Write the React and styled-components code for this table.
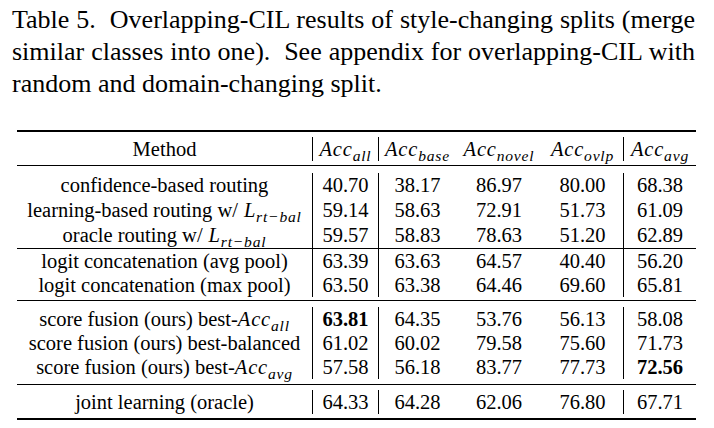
import React from "react";
import styled, { createGlobalStyle } from "styled-components";

const GlobalStyle = createGlobalStyle`
  html, body {
    margin: 0;
    padding: 0;
    background: #fff;
  }
`;

const Page = styled.div`
  width: 714px;
  height: 428px;
  overflow: hidden;
  font-family: "Liberation Serif", "Times New Roman", serif;
  color: #000;
`;

const Caption = styled.div`
  padding: 4px 0 0 12px;
  width: 683px;
  font-size: 26px;
  line-height: 32px;
`;

const Line = styled.div`
  text-align: justify;
  text-align-last: ${p => (p.$last ? "left" : "justify")};
  white-space: nowrap;
`;

const Table = styled.div`
  margin: 30px 0 0 17px;
  width: 679px;
  font-size: 20.5px;
`;

const Rule = styled.div`
  height: ${p => p.$w || 1}px;
  background: #000;
`;

const Block = styled.div`
  padding: ${p => p.$pt || 0}px 0 ${p => p.$pb || 0}px;
`;

const Row = styled.div`
  display: grid;
  grid-template-columns: 295px 66px 78px 86px 81px 73px;
  height: ${p => p.$h || 24}px;
`;

const Cell = styled.div`
  display: flex;
  align-items: center;
  justify-content: center;
  border-left: ${p => (p.$bar ? "1px solid #000" : "none")};
  font-weight: ${p => (p.$bold ? 700 : 400)};
  white-space: nowrap;
`;

const MathI = styled.i`
  font-style: italic;
  letter-spacing: 0.8px;
  margin-left: ${p => (p.$gap ? "6px" : "0")};
`;

const Sub = styled.sub`
  font-size: 0.76em;
  vertical-align: -0.3em;
  line-height: 0;
  letter-spacing: 0.8px;
`;

const acc = s => (
  <MathI>
    Acc<Sub>{s}</Sub>
  </MathI>
);

const lrt = (
  <MathI $gap>
    L<Sub>rt−bal</Sub>
  </MathI>
);

const blocks = [
  {
    pt: 7,
    pb: 0,
    h: 25,
    rows: [
      [<>confidence-based routing</>, "40.70", "38.17", "86.97", "80.00", "68.38"],
      [<>learning-based routing w/{lrt}</>, "59.14", "58.63", "72.91", "51.73", "61.09"],
      [<>oracle routing w/{lrt}</>, "59.57", "58.83", "78.63", "51.20", "62.89"],
    ],
  },
  {
    pt: 0,
    pb: 3,
    h: 24,
    rows: [
      [<>logit concatenation (avg pool)</>, "63.39", "63.63", "64.57", "40.40", "56.20"],
      [<>logit concatenation (max pool)</>, "63.50", "63.38", "64.46", "69.60", "65.81"],
    ],
  },
  {
    pt: 6,
    pb: 5,
    h: 24,
    rows: [
      [<>score fusion (ours) best-{acc("all")}</>, "*63.81", "64.35", "53.76", "56.13", "58.08"],
      [<>score fusion (ours) best-balanced</>, "61.02", "60.02", "79.58", "75.60", "71.73"],
      [<>score fusion (ours) best-{acc("avg")}</>, "57.58", "56.18", "83.77", "77.73", "*72.56"],
    ],
  },
  {
    pt: 5,
    pb: 4,
    h: 24,
    rows: [[<>joint learning (oracle)</>, "64.33", "64.28", "62.06", "76.80", "67.71"]],
  },
];

const bars = [false, true, true, false, false, true];

function DataRow({ cells, h }) {
  return (
    <Row $h={h}>
      {cells.map((c, i) => {
        const bold = typeof c === "string" && c.startsWith("*");
        return (
          <Cell key={i} $bar={bars[i]} $bold={bold}>
            {bold ? c.slice(1) : c}
          </Cell>
        );
      })}
    </Row>
  );
}

export default function App() {
  return (
    <Page>
      <GlobalStyle />
      <Caption>
        <Line>Table 5.&nbsp; Overlapping-CIL results of style-changing splits (merge</Line>
        <Line>similar classes into one).&nbsp; See appendix for overlapping-CIL with</Line>
        <Line $last>random and domain-changing split.</Line>
      </Caption>
      <Table>
        <Rule $w={2} />
        <Block $pt={5} $pb={4}>
          <DataRow
            h={24}
            cells={["Method", acc("all"), acc("base"), acc("novel"), acc("ovlp"), acc("avg")]}
          />
        </Block>
        {blocks.map((b, bi) => (
          <React.Fragment key={bi}>
            <Rule $w={1} />
            <Block $pt={b.pt} $pb={b.pb}>
              {b.rows.map((r, ri) => (
                <DataRow key={ri} cells={r} h={b.h} />
              ))}
            </Block>
          </React.Fragment>
        ))}
        <Rule $w={2} />
      </Table>
    </Page>
  );
}
